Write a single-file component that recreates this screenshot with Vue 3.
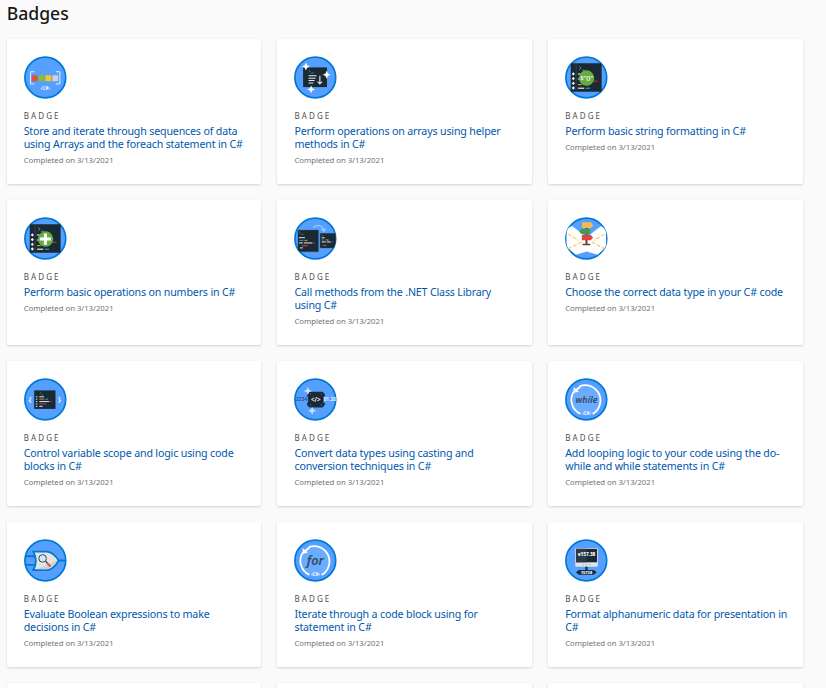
<script setup>
const badges = [
  { icon: 'array', title: ['Store and iterate through sequences of data', 'using Arrays and the foreach statement in C#'] },
  { icon: 'helper', title: ['Perform operations on arrays using helper', 'methods in C#'] },
  { icon: 'string', title: ['Perform basic string formatting in C#'] },
  { icon: 'numbers', title: ['Perform basic operations on numbers in C#'] },
  { icon: 'library', title: ['Call methods from the .NET Class Library', 'using C#'] },
  { icon: 'types', title: ['Choose the correct data type in your C# code'] },
  { icon: 'scope', title: ['Control variable scope and logic using code', 'blocks in C#'] },
  { icon: 'convert', title: ['Convert data types using casting and', 'conversion techniques in C#'] },
  { icon: 'while', title: ['Add looping logic to your code using the do-', 'while and while statements in C#'] },
  { icon: 'boolean', title: ['Evaluate Boolean expressions to make', 'decisions in C#'] },
  { icon: 'for', title: ['Iterate through a code block using for', 'statement in C#'] },
  { icon: 'format', title: ['Format alphanumeric data for presentation in', 'C#'] },
]
const stars = {
  helper: [[12, 10.4], [33, 18.7], [17.3, 33.5]],
  convert: [[14, 12.9], [18.3, 32.9]],
}
const squares = ['#e1523d', '#8cbf26', '#fcc419', '#d2d2d2']
const dots = [17.9, 22.6, 27.4, 32.1]
</script>

<template>
  <main class="page">
    <h2 class="heading">Badges</h2>
    <div class="grid">
      <article v-for="b in badges" :key="b.icon" class="card">
        <svg class="icon" viewBox="0 0 43 43" aria-hidden="true">
          <defs>
            <clipPath :id="'clip-' + b.icon"><circle cx="21.5" cy="21.5" r="20.9" /></clipPath>
          </defs>
          <circle cx="21.5" cy="21.5" r="20.6" fill="#55a0ff" stroke="#0078d7" stroke-width="1.7" />

          <g v-if="b.icon === 'array'">
            <path d="M10.5 15.7H6.6V28H10.5M32 15.7H36.2V28H32" fill="none" stroke="#e4f1ff" stroke-width="1" />
            <rect v-for="(c, i) in squares" :key="c" :x="7.9 + i * 6.9" y="19.2" width="5.8" height="6" :fill="c" />
            <text x="21.4" y="34.5" class="code" font-size="4.8">‹C#›</text>
          </g>

          <g v-else-if="b.icon === 'helper'">
            <path d="M9.2 11.3H33.3V31.2H9.2Z" fill="#192a35" />
            <path d="M15 14.2l1.2 1-1.2 1M17 17h3" fill="none" stroke="#8c98a0" stroke-width=".6" />
            <path d="M14.7 19.8H22.8M14.7 22.2H21.8M14.7 24.6H20.8M14.7 27H19.5" stroke="#e8eaec" stroke-width="1.1" />
            <path d="M26.1 19.8V28M23.8 25.6L26.1 28L28.4 25.6" fill="none" stroke="#d9dde0" stroke-width="1.2" />
          </g>

          <g v-else-if="b.icon === 'string' || b.icon === 'numbers'">
            <rect x="5.8" y="7" width="31.2" height="29" rx="1" fill="#192a35" />
            <path d="M11.2 7V36" stroke="#40505b" stroke-width=".6" />
            <path d="M14.3 10.3l2 1.7-2 1.7M17.2 14.2h3.2" fill="none" stroke="#82909a" stroke-width=".8" />
            <path v-for="y in dots" :key="y" :d="`M8.4 ${y - 1.7}l1.6 1.7-1.6 1.7-1.6-1.7z`" fill="#f4f7fa" />
            <path d="M13 17.9h3M13 23h2" stroke="#fff" stroke-width="1.1" />
            <path d="M13.2 28.7h3.5" stroke="#f4a51c" stroke-width="1.1" />
            <path d="M29 25.3h3.8" stroke="#b92c35" stroke-width="1.2" />
            <path d="M13.2 32.3h6.2" stroke="#fff" stroke-width="1.1" />
            <path d="M21 32.3h4.3" stroke="#2da4d9" stroke-width="1.1" />
            <circle cx="21.8" cy="22.1" r="7.8" fill="#65ad40" />
            <text v-if="b.icon === 'string'" x="21.8" y="24.2" class="code" font-size="5.8">$"{}"</text>
            <path v-else d="M21.6 16.5V27.7M16 22.1H27.2" stroke="#fff" stroke-width="3" />
          </g>

          <g v-else-if="b.icon === 'library'" clip-path="url(#clip-library)">
            <path d="M4 13H24.7V35H4ZM26.3 16.3H42.2V31H26.3Z" fill="#192a35" stroke="#3a536a" stroke-width=".4" />
            <path d="M19.3 10.6C23 7 29 8 30 13.4M27.6 11.7L30.2 14L32 11.2" fill="none" stroke="#a9d1fd" stroke-width="1.1" />
            <path d="M5.2 14.3l1.2 1-1.2 1M6.5 17.2H10M28 17.7l1 .8-1 .8" fill="none" stroke="#71808a" stroke-width=".6" />
            <path d="M5 20.7h6M5 26h4M6 31h3M28 20.8h3M28 25h4" stroke="#e8edf0" stroke-width="1" />
            <path d="M5.5 23.4h4M28 23h2" stroke="#2d9fc6" stroke-width="1" />
            <path d="M10.5 23.4h3M32 23h3" stroke="#d9a136" stroke-width="1" />
            <path d="M10 26h8.5M33 25h4" stroke="#e8edf0" stroke-width="1" />
            <path d="M19 26h1.8M8 28.8h6M29 28.5h4M38 25h1" stroke="#dd4650" stroke-width="1" />
          </g>

          <g v-else-if="b.icon === 'types'" clip-path="url(#clip-types)">
            <path d="M1.5 12L7 9L22 20L36.5 9L41.5 13V30L33 38L22 34.5L11 38L1.5 30Z" fill="#fff" />
            <path d="M3 17L14 23.5M40 17L29 23.5M17 25L3 32M27 25L40 32" stroke="#f8cb74" stroke-width="1.3" stroke-dasharray="4 1.8" />
            <path d="M21.7 7V28" stroke="#6d3e29" stroke-width="2" />
            <path d="M17.7 26.8h7.8v1.5h-7.8z" fill="#6d3e29" />
            <path d="M17 5H26.3L28.4 8.1L26.3 11H17Z" fill="#f5b84f" />
            <path d="M25.5 11.8H16.8L14.2 14.4L16.8 17.2H25.5Z" fill="#439b4c" />
            <path d="M17 17.9H26L28.4 20.4L26 23.3H17Z" fill="#e04444" />
          </g>

          <g v-else-if="b.icon === 'scope'">
            <path d="M10.3 12.3H31.8V31H10.3Z" fill="#192a35" />
            <text x="6.2" y="24.2" class="code" font-size="8">{</text>
            <text x="35.8" y="24.2" class="code" font-size="8">}</text>
            <path d="M16 13.7l1 .9-1 .9M17 16.7h2.6" fill="none" stroke="#71808a" stroke-width=".6" />
            <path d="M12 18.8h1.5M12 21.2h1.5M12 23.6h1.5M12 26h1.5M12 28.4h1.5M15.5 18.8h4.7M15.5 23.6h10M15.5 28.4h3.3" stroke="#e8edf0" stroke-width="1" />
            <path d="M15.5 21.2h5" stroke="#cb893b" stroke-width="1" />
            <path d="M21.5 21.2h3" stroke="#2d9fc6" stroke-width="1" />
            <path d="M26.5 23.6h1.5M15.5 26h7" stroke="#c84148" stroke-width="1" />
          </g>

          <g v-else-if="b.icon === 'convert'" clip-path="url(#clip-convert)">
            <text x="7.6" y="23.2" class="code dark" font-size="5.2">2234</text>
            <text x="36.2" y="23.2" class="code" font-size="5">01.20</text>
            <path d="M15.4 13.6H28.8L31.1 16V18.4H29.8V24.8H31.1V27.1L28.8 29.5H15.4L13.2 27.1V24.8H14.2V18.4H13.2V16Z" fill="#192a35" />
            <text x="22" y="23.6" class="code" font-size="6.2">&lt;/&gt;</text>
            <path d="M16 16h1M27 16h1M16 27h1M27 27h1" stroke="#91a3ad" stroke-width=".8" />
          </g>

          <g v-else-if="b.icon === 'while' || b.icon === 'for'">
            <circle cx="21.7" cy="21.8" r="15.3" fill="#6aacff" />
            <path d="M15.5 36A15.5 15.5 0 0 1 9.1 13.2M14.8 8A15.5 15.5 0 0 1 27.9 36" fill="none" stroke="#fff" stroke-width="1.8" />
            <path d="M8.8 9L8.6 14.6L14 13.6L12.5 12.1L16 9.5L14.6 7.8L10.8 10.8Z" fill="#fff" />
            <text v-if="b.icon === 'while'" x="21.7" y="25" class="loop" font-size="9">while</text>
            <text v-else x="21.5" y="25.8" class="loop" font-size="12.8">for</text>
            <text x="21.7" y="37" class="code" font-size="4.4">‹C#›</text>
          </g>

          <g v-else-if="b.icon === 'boolean'">
            <path d="M1.5 17.2H12M1.5 25.9H12M35 21.5H42" stroke="#0078d7" stroke-width="1.9" />
            <path d="M9.3 12.5H23C28 13 32 16.5 35 21.5C32 27 28 30.8 23 31.3H9.3C12.8 25 12.8 18.5 9.3 12.5Z" fill="#e4e4e2" stroke="#0078d7" stroke-width="1.8" />
            <path d="M13.5 30L33.5 21.5C30.5 27 27 30 22.5 30.3Z" fill="#d1d1cf" />
            <path d="M21.8 22.3L24 24.5" stroke="#384652" stroke-width="1.4" />
            <path d="M23.2 24L26.8 27.5" stroke="#e15445" stroke-width="2.1" />
            <circle cx="18.8" cy="19.4" r="3.8" fill="#ccecf8" stroke="#354652" stroke-width="1" />
          </g>

          <g v-else>
            <rect x="10.4" y="8.8" width="22.7" height="19" rx=".7" fill="#e0e2e4" />
            <path d="M11.2 9.7H32.3V23.3H11.2Z" fill="#192a35" />
            <path d="M11.2 9.7H21.7V23.3H11.2Z" fill="#2c3c46" />
            <text x="21.7" y="16.7" class="code heavy" font-size="4.7">e157.38</text>
            <path d="M18 25.7h1M21.2 25.7h1M24.4 25.7h1" stroke="#9ba1a6" stroke-width="1" />
            <path d="M21.7 27.8V31" stroke="#192a35" stroke-width="2.3" />
            <path d="M11 33.4L14 31H29L32 33.4L29 35.8H14Z" fill="#192a35" />
            <text x="21.7" y="35" class="code heavy" font-size="4">15738</text>
          </g>

          <path
            v-for="[x, y] in stars[b.icon] || []"
            :key="x"
            :d="`M${x} ${y - 4}L${x + 1.2} ${y - 1.2}L${x + 4} ${y}L${x + 1.2} ${y + 1.2}L${x} ${y + 4}L${x - 1.2} ${y + 1.2}L${x - 4} ${y}L${x - 1.2} ${y - 1.2}Z`"
            :fill="b.icon === 'convert' ? '#c7e2ff' : '#fff'"
          />
        </svg>
        <p class="kind">BADGE</p>
        <a class="title"><span v-for="line in b.title" :key="line" class="line">{{ line }}</span></a>
        <p class="date">Completed on 3/13/2021</p>
      </article>
      <article v-for="n in 3" :key="n" class="card"></article>
    </div>
  </main>
</template>

<style>
body { margin: 0; background: #fafafa; overflow: hidden; }
</style>

<style scoped>
.page {
  box-sizing: border-box;
  height: 688px;
  overflow: hidden;
  padding: 0 23px 0 6.7px;
  background: #fafafa;
  font-family: "Noto Sans", "Open Sans", sans-serif;
}
.heading {
  margin: 0;
  height: 39px;
  color: #171717;
  font-size: 17.6px;
  font-weight: 500;
  line-height: 27px;
}
.grid {
  display: grid;
  grid-template-columns: repeat(3, minmax(0, 1fr));
  grid-auto-rows: 145px;
  gap: 16px;
}
.card {
  box-sizing: border-box;
  padding: 17px;
  background: #fff;
  border-radius: 2px;
  box-shadow: 0 1px 2.5px rgba(0, 0, 0, 0.16);
}
.icon { display: block; width: 42.6px; height: 43px; overflow: visible; }
.kind {
  margin: 11px 0 0;
  color: #505050;
  font-size: 8px;
  line-height: 12px;
  letter-spacing: 2.1px;
}
.title {
  display: block;
  margin-top: 3px;
  color: #0058ad;
  font-size: 10.67px;
  line-height: 13px;
  letter-spacing: -0.17px;
  white-space: nowrap;
}
.line { display: block; }
.date {
  margin: 3.5px 0 0;
  color: #737373;
  font-size: 7.8px;
  line-height: 11px;
  letter-spacing: -0.04px;
}
.code {
  fill: #fff;
  font-family: "Noto Sans", sans-serif;
  font-weight: 600;
  letter-spacing: 0;
  text-anchor: middle;
}
.dark { fill: #254d77; }
.heavy { font-weight: 800; }
.loop {
  fill: #34495c;
  font-family: "Noto Sans", sans-serif;
  font-style: italic;
  font-weight: 600;
  text-anchor: middle;
}
</style>
